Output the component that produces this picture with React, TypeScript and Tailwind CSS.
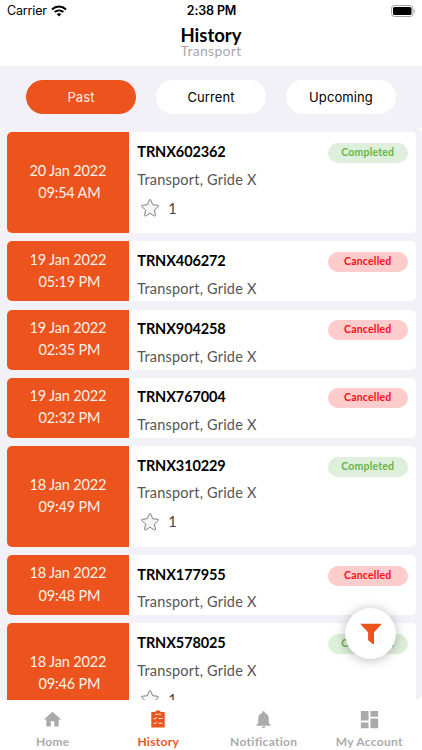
import { useState } from "react";
import { MdDashboard, MdHome, MdNotifications } from "react-icons/md";

interface Trip {
  id: string;
  date: string;
  time: string;
  place: string;
  status: "Completed" | "Cancelled";
  rating?: number;
}

const TRIPS: Trip[] = [
  { id: "TRNX602362", date: "20 Jan 2022", time: "09:54 AM", place: "Transport, Gride X", status: "Completed", rating: 1 },
  { id: "TRNX406272", date: "19 Jan 2022", time: "05:19 PM", place: "Transport, Gride X", status: "Cancelled" },
  { id: "TRNX904258", date: "19 Jan 2022", time: "02:35 PM", place: "Transport, Gride X", status: "Cancelled" },
  { id: "TRNX767004", date: "19 Jan 2022", time: "02:32 PM", place: "Transport, Gride X", status: "Cancelled" },
  { id: "TRNX310229", date: "18 Jan 2022", time: "09:49 PM", place: "Transport, Gride X", status: "Completed", rating: 1 },
  { id: "TRNX177955", date: "18 Jan 2022", time: "09:48 PM", place: "Transport, Gride X", status: "Cancelled" },
  { id: "TRNX578025", date: "18 Jan 2022", time: "09:46 PM", place: "Transport, Gride X", status: "Completed", rating: 1 },
];

const TABS = ["Past", "Current", "Upcoming"];

function ClipboardIcon() {
  return (
    <svg width="14" height="18" viewBox="0 0 14 18">
      <path
        fill="currentColor"
        d="M1.3 2H4.3C4.6 .9 5.6 .2 7 .2S9.4 .9 9.7 2h3c.6 0 1 .4 1 1v13.6c0 .6-.4 1-1 1H1.3c-.6 0-1-.4-1-1V3c0-.6.4-1 1-1z"
      />
      <path d="M3.9 4.3h6.2" stroke="white" strokeWidth=".8" />
      <path
        d="M2.6 8.2l1.1 1.1 2-2.2M2.6 12.9l1.1 1.1 2-2.2M7.6 8.5h3.7M7.6 13.2h3.7"
        fill="none"
        stroke="white"
        strokeWidth="1"
      />
    </svg>
  );
}

function FunnelIcon() {
  return (
    <svg width="22" height="22" viewBox="0 0 22 22" fill="currentColor">
      <path d="M.9 .7h20.2v1.1L14 9.300v12h-.9L8.100 17.300v-8L.9 1.800z" />
    </svg>
  );
}

function StarIcon() {
  return (
    <svg width="20" height="20" viewBox="0 0 20 20">
      <path
        d="M10 1.4c.3 0 .5.2.6.4l2.100 4.900 5.200.6c.7.1.9.8.4 1.200l-3.900 3.500 1.100 5.300c.1.600-.5 1-1 .7L10 15.300 5.500 18c-.5.3-1.100-.1-1-.7l1.100-5.300-3.900-3.500c-.5-.4-.3-1.100.4-1.200l5.200-.6 2.100-4.900c.1-.2.300-.4.600-.4z"
        fill="#f5f5f5"
        stroke="#808080"
        strokeWidth="1"
        strokeLinejoin="round"
      />
    </svg>
  );
}

function StatusBar() {
  return (
    <div className="flex h-[22px] items-center justify-between pl-[7px] pr-[6px] font-['Inter',sans-serif] text-[12.5px] leading-[22px] text-black">
      <div className="flex flex-1 items-center gap-[4px]">
        <span className="-tracking-[0.15px]">Carrier</span>
        <svg width="16" height="12" viewBox="0 0 16 12" fill="none" stroke="black">
          <path d="M1 4.4C5 .6 11 .6 15 4.4" strokeWidth="2.1" />
          <path d="M3.6 7.1c2.6-2.3 6.2-2.3 8.8 0" strokeWidth="2" />
          <path d="M5.6 9.1c1.4-1.2 3.4-1.2 4.8 0L8 11.5z" fill="black" stroke="none" />
        </svg>
      </div>
      <span className="font-semibold -tracking-[0.15px]">2:38 PM</span>
      <div className="flex flex-1 justify-end">
        <svg width="25" height="12" viewBox="0 0 25 12">
          <rect x=".5" y=".5" width="21.5" height="11" rx="3" fill="none" stroke="#a3a3a3" />
          <rect x="2" y="2" width="18.5" height="8" rx="1.6" fill="black" />
          <path d="M23.3 4.2c1.3.5 1.3 3.1 0 3.6z" fill="#a3a3a3" />
        </svg>
      </div>
    </div>
  );
}

function TripCard({ trip }: { trip: Trip }) {
  const done = trip.status === "Completed";
  return (
    <div className={`flex shrink-0 overflow-hidden rounded-[5px] bg-white ${trip.rating ? "h-[100.7px]" : "h-[60px]"}`}>
      <div className="flex w-[122.8px] flex-col items-center justify-center bg-[#ec531d] pb-[1px] text-[14.5px] leading-[22.3px] text-[#fff0e9]">
        <span className="-tracking-[0.15px]">{trip.date}</span>
        <span className="pl-[3px] -tracking-[0.2px]">{trip.time}</span>
      </div>
      <div className="flex flex-1 flex-col pl-[8px] pr-[8px]">
        <div className="flex h-[34px] items-start justify-between">
          <span className="pt-[9.5px] text-[14.5px] font-bold leading-5 -tracking-[0.1px] text-black">{trip.id}</span>
          <span
            className={`mt-[10.5px] flex h-5 w-[79.5px] items-center justify-center rounded-full text-[10.5px] font-bold tracking-[0.2px] ${
              done ? "bg-[#deefdb] text-[#67b54d]" : "bg-[#ffcccc] text-[#fb0d1b]"
            }`}
          >
            {trip.status}
          </span>
        </div>
        <span className="mt-[3.4px] text-[14.5px] leading-5 tracking-[0.2px] text-[#555]">{trip.place}</span>
        {trip.rating && (
          <div className="mt-[8px] flex items-center gap-[8px] pl-[3px] text-[14.5px] leading-5 text-[#444]">
            <StarIcon />
            <span className="pt-[1px]">{trip.rating}</span>
          </div>
        )}
      </div>
    </div>
  );
}

export default function App() {
  const [tab, setTab] = useState("Past");

  const nav = [
    { label: "Home", icon: <MdHome size={21} /> },
    { label: "History", icon: <ClipboardIcon /> },
    { label: "Notification", icon: <MdNotifications size={21} /> },
    { label: "My Account", icon: <MdDashboard size={23} /> },
  ];

  return (
    <div className="relative flex h-[750px] w-[422px] flex-col overflow-hidden bg-white font-['Lato',sans-serif]">
      <StatusBar />
      <header className="flex h-[43.5px] shrink-0 flex-col items-center pt-[3px]">
        <h1 className="text-[18.5px] font-bold leading-5 text-black">History</h1>
        <p className="-mt-px text-[14px] leading-[14px] tracking-[0.3px] text-[#aaa]">Transport</p>
      </header>

      <div className="flex h-[62.5px] shrink-0 justify-center gap-5 bg-[#f2f1f8] pt-[14.5px]">
        {TABS.map((t) => (
          <button
            key={t}
            onClick={() => setTab(t)}
            className={`h-[34px] w-[110px] rounded-full pt-px font-['Inter',sans-serif] text-[13px] tracking-[0.1px] ${
              t === tab ? "bg-[#ec531d] text-[#ffeee6]" : "bg-white text-black"
            }`}
          >
            {t}
          </button>
        ))}
      </div>

      <main className="flex h-[571.5px] shrink-0 flex-col gap-[8.25px] overflow-hidden rounded-[6px] bg-[#f2f1f8] px-[6.5px] pt-[4.4px]">
        {TRIPS.map((trip) => (
          <TripCard key={trip.id} trip={trip} />
        ))}
      </main>

      <nav className="grid flex-1 grid-cols-4 bg-white">
        {nav.map((item) => (
          <button
            key={item.label}
            className={`flex flex-col items-center pt-[7.5px] text-[12px] font-bold ${
              item.label === "History" ? "text-[#ec531d]" : "text-[#aaa]"
            }`}
          >
            <span className="flex h-6 items-center">{item.icon}</span>
            <span className="mt-[3px] leading-4 tracking-[0.3px]">{item.label}</span>
          </button>
        ))}
      </nav>

      <button className="absolute left-[345px] top-[608px] flex size-[51px] items-center justify-center rounded-full bg-white text-[#ec531d] shadow-[0_1px_12px_rgba(0,0,0,0.28)]">
        <FunnelIcon />
      </button>
    </div>
  );
}
